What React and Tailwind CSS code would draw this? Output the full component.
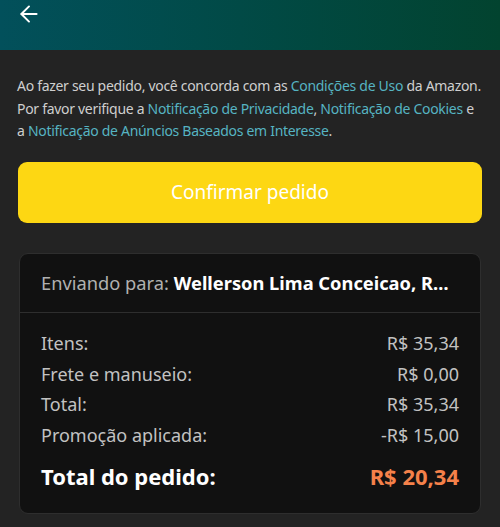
import React from "react";
import { ArrowLeft } from "lucide-react";

const rows = [
  { label: "Itens:", value: "R$ 35,34" },
  { label: "Frete e manuseio:", value: "R$ 0,00" },
  { label: "Total:", value: "R$ 35,34" },
  { label: "Promoção aplicada:", value: "-R$ 15,00" },
];

const Link = ({ children }) => <span className="text-[#56b4c2]">{children}</span>;

export default function App() {
  return (
    <div className="w-[500px] h-[527px] overflow-hidden bg-[#232323] font-['Noto_Sans',sans-serif]">
      {/* header */}
      <div className="h-[50px] bg-gradient-to-r from-[#02505b] to-[#02432f] flex items-start pl-[16px] pt-[1px]">
        <ArrowLeft size={26} strokeWidth={1.8} className="text-white" />
      </div>

      <p className="px-[17px] pt-[25px] text-[14px] tracking-[-0.3px] leading-[22.5px] text-[#cfcfcf]">
        Ao fazer seu pedido, você concorda com as <Link>Condições de Uso</Link> da Amazon.
        Por favor verifique a <Link>Notificação de Privacidade</Link>, <Link>Notificação de Cookies</Link> e
        a <Link>Notificação de Anúncios Baseados em Interesse</Link>.
      </p>

      <div className="px-[18px] pt-[19px]">
        <button className="w-full h-[61px] rounded-[9px] bg-[#fdd713] text-white text-[19px] flex items-center justify-center">
          Confirmar pedido
        </button>
      </div>

      <div className="mx-[19px] mt-[30px] rounded-[9px] bg-[#111111] border border-[#2e2e2e]">
        <div className="h-[59px] flex items-center px-[21px] border-b border-[#2e2e2e] text-[18.3px] whitespace-nowrap overflow-hidden">
          <span className="text-[#b0b0b0]">Enviando para:&nbsp;</span>
          <span className="text-white font-bold">Wellerson Lima Conceicao, R…</span>
        </div>
        <div className="px-[21px] pt-[16px] pb-[17px]">
          {rows.map((r) => (
            <div key={r.label} className="flex justify-between h-[30.5px] items-center text-[18px] text-[#c2c2c2]">
              <span>{r.label}</span>
              <span>{r.value}</span>
            </div>
          ))}
          <div className="flex justify-between items-center h-[45px] pt-[6px] text-[22px] font-bold">
            <span className="text-white">Total do pedido:</span>
            <span className="text-[#f5814a]">R$ 20,34</span>
          </div>
        </div>
      </div>
    </div>
  );
}
